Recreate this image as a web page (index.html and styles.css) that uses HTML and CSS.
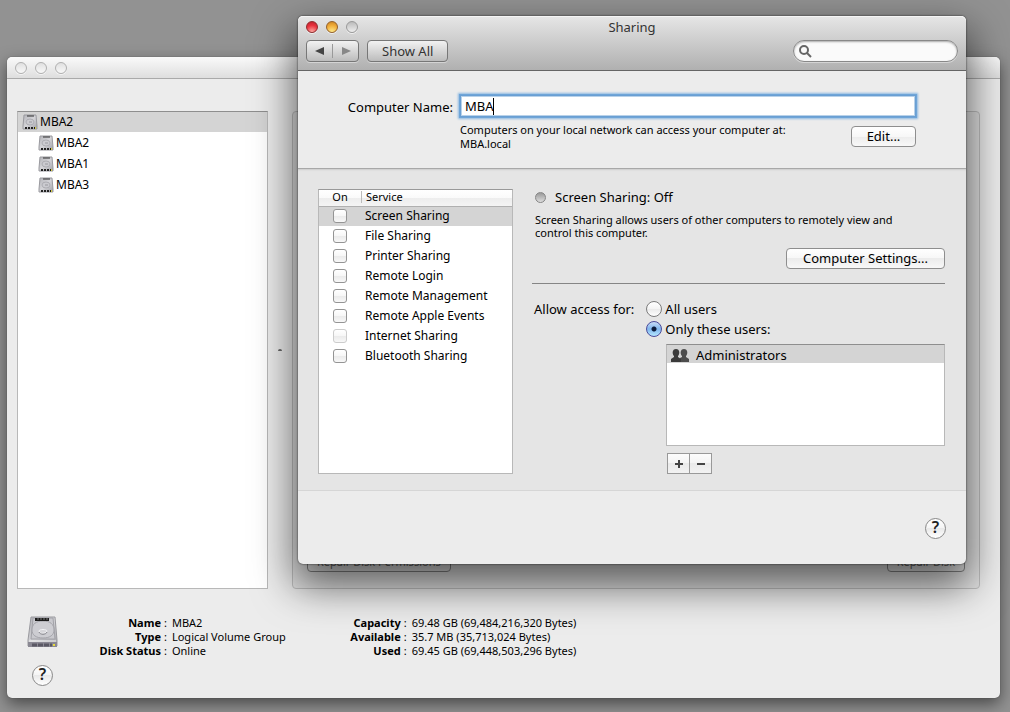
FILE: index.html
```html
<!DOCTYPE html>
<html lang="en">
<head>
    <meta charset="UTF-8">
    <meta name="viewport" content="width=device-width, initial-scale=1.0">
    <title>Sharing</title>
    <link rel="stylesheet" href="styles.css">
</head>
<body>
    <!-- Shared icons -->
    <svg class="defs" width="0" height="0" aria-hidden="true">
        <defs>
            <linearGradient id="metal" x1="0" y1="0" x2="1" y2="1">
                <stop offset="0" stop-color="#b4b4b9"/>
                <stop offset="0.5" stop-color="#d4d4d8"/>
                <stop offset="1" stop-color="#a2a2a8"/>
            </linearGradient>
            <symbol id="disk" viewBox="0 0 32 32">
                <path d="M4 1h24l2 23v6H1v-6z" fill="url(#metal)" stroke="#9a9a9f"/>
                <path d="M6 2h20l2 21H4z" fill="#c9c9ce" stroke="#a2a2a8"/>
                <path d="M5 14c0-6 4-9 11-9s11 3 11 9c0 5-4 8-11 8S5 19 5 14z" fill="#cdcdd2" stroke="#a4a4aa"/>
                <path d="M12 15c0-2 8-2 8 0s-8 4-8 0z" fill="#d6d6da" stroke="#f2f2f4"/>
                <path d="M12 16c1 3 7 3 8 0" fill="none" stroke="#85858b"/>
                <path d="M8 2h14v3H8z" fill="#1c1c1c"/>
                <path d="M10 3h2m1 0h2m1 0h2m1 0h2" stroke="#777"/>
                <path d="M1 26h29v5H1z" fill="#8a8893"/>
                <path d="M5 29h20" stroke="#5a5864" stroke-width="3" stroke-dasharray="5 1"/>
                <path d="M26 28h2v2h-2z" fill="#e9dc3a"/>
                <path d="M2 25h27" stroke="#eee"/>
            </symbol>
            <symbol id="disk-small" viewBox="0 0 16 16">
                <path d="M2 1h12l1 11v3H1v-3z" fill="url(#metal)" stroke="#9a9a9f"/>
                <path d="M5 2h7" stroke="#333"/>
                <ellipse cx="8" cy="8" rx="4" ry="3" fill="#cbcbd0" stroke="#adadb3"/>
                <path d="M7 8h3" stroke="#98989e"/>
                <path d="M3 14h10" stroke="#222" stroke-width="2" stroke-dasharray="2 1"/>
                <path d="M13 13h1v2h-1z" fill="#d8ce45"/>
            </symbol>
        </defs>
    </svg>

    <div class="desktop">
        <!-- Disk utility window -->
        <section class="window disk-window">
            <header class="titlebar">
                <button class="light" aria-label="Close"></button>
                <button class="light" aria-label="Minimize"></button>
                <button class="light" aria-label="Zoom"></button>
            </header>
            <div class="disk-body">
                <ul class="disk-list">
                    <li class="selected"><svg class="disk-icon"><use href="#disk-small"/></svg>MBA2</li>
                    <li class="child"><svg class="disk-icon"><use href="#disk-small"/></svg>MBA2</li>
                    <li class="child"><svg class="disk-icon"><use href="#disk-small"/></svg>MBA1</li>
                    <li class="child"><svg class="disk-icon"><use href="#disk-small"/></svg>MBA3</li>
                </ul>
                <div class="splitter"><span class="grip"></span></div>
                <div class="disk-panel">
                    <button class="push" disabled>Repair Disk Permissions</button>
                    <button class="push" disabled>Repair Disk</button>
                </div>
            </div>
            <footer class="disk-info">
                <svg class="disk-large"><use href="#disk"/></svg>
                <dl class="facts">
                    <dt>Name</dt><dd>MBA2</dd>
                    <dt>Type</dt><dd>Logical Volume Group</dd>
                    <dt>Disk Status</dt><dd>Online</dd>
                </dl>
                <dl class="facts facts-size">
                    <dt>Capacity</dt><dd>69.48 GB (69,484,216,320 Bytes)</dd>
                    <dt>Available</dt><dd>35.7 MB (35,713,024 Bytes)</dd>
                    <dt>Used</dt><dd>69.45 GB (69,448,503,296 Bytes)</dd>
                </dl>
            </footer>
            <div class="disk-help">
                <button class="help">?</button>
            </div>
        </section>

        <!-- Sharing window -->
        <section class="window sharing-window">
            <header class="toolbar">
                <div class="title-row">
                    <div class="lights">
                        <button class="light red" aria-label="Close"></button>
                        <button class="light yellow" aria-label="Minimize"></button>
                        <button class="light" aria-label="Zoom"></button>
                    </div>
                    <h1>Sharing</h1>
                </div>
                <div class="tool-row">
                    <div class="nav">
                        <button aria-label="Back"><svg width="10" height="8"><path d="M9 0v8L0 4z" fill="#444"/></svg></button>
                        <button aria-label="Forward"><svg width="10" height="8"><path d="M1 0v8l9-4z" fill="#888"/></svg></button>
                    </div>
                    <button class="tool">Show All</button>
                    <label class="search">
                        <svg width="14" height="14" viewBox="0 0 14 14"><circle cx="6" cy="6" r="4" fill="none" stroke="#666" stroke-width="2"/><path d="M9 9l4 4" stroke="#666" stroke-width="2"/></svg>
                        <input type="search" aria-label="Search">
                    </label>
                </div>
            </header>

            <div class="name-section">
                <label for="computer-name">Computer Name:</label>
                <div class="name-field">
                    <input type="text" id="computer-name" value="MBA">
                    <span class="caret"></span>
                    <div class="name-note">
                        <p class="small">Computers on your local network can access your computer at:<br>MBA.local</p>
                        <button class="push">Edit...</button>
                    </div>
                </div>
            </div>

            <div class="service-section">
                <div class="service-box">
                    <table class="services">
                        <thead>
                            <tr><th>On</th><th><span>Service</span></th></tr>
                        </thead>
                        <tbody>
                            <tr class="selected"><td><input type="checkbox" id="screen"></td><td><label for="screen">Screen Sharing</label></td></tr>
                            <tr><td><input type="checkbox" id="file"></td><td><label for="file">File Sharing</label></td></tr>
                            <tr><td><input type="checkbox" id="printer"></td><td><label for="printer">Printer Sharing</label></td></tr>
                            <tr><td><input type="checkbox" id="login"></td><td><label for="login">Remote Login</label></td></tr>
                            <tr><td><input type="checkbox" id="management"></td><td><label for="management">Remote Management</label></td></tr>
                            <tr><td><input type="checkbox" id="events"></td><td><label for="events">Remote Apple Events</label></td></tr>
                            <tr><td><input type="checkbox" id="internet" disabled></td><td><label for="internet">Internet Sharing</label></td></tr>
                            <tr><td><input type="checkbox" id="bluetooth"></td><td><label for="bluetooth">Bluetooth Sharing</label></td></tr>
                        </tbody>
                    </table>
                </div>

                <div class="details">
                    <h2><span class="status"></span>Screen Sharing: Off</h2>
                    <p class="small">Screen Sharing allows users of other computers to remotely view and control this computer.</p>
                    <button class="push settings">Computer Settings...</button>
                    <hr>
                    <div class="access" role="radiogroup" aria-labelledby="access-label">
                        <span id="access-label">Allow access for:</span>
                        <div class="choices">
                            <label><input type="radio" name="access">All users</label>
                            <label><input type="radio" name="access" checked>Only these users:</label>
                        </div>
                    </div>
                    <div class="users">
                        <ul class="user-list">
                            <li>
                                <svg width="18" height="14" viewBox="0 0 18 14">
                                    <path d="M9 14v-4l2-1V8C9 6 9 1 13 1s4 5 2 7v1l3 2v3z" fill="#4c4c4c"/>
                                    <path d="M0 14v-3l3-2V8C1 6 1 1 5 1s4 5 2 7v1l3 2v3z" fill="#3a3a3a"/>
                                </svg>
                                Administrators
                            </li>
                        </ul>
                        <div class="add-remove">
                            <button aria-label="Add"><svg width="8" height="8"><path d="M4 0v8M0 4h8" stroke="#444" stroke-width="2"/></svg></button>
                            <button aria-label="Remove"><svg width="8" height="8"><path d="M0 4h8" stroke="#444" stroke-width="2"/></svg></button>
                        </div>
                    </div>
                </div>
            </div>

            <footer class="sharing-footer">
                <button class="help">?</button>
            </footer>
        </section>
    </div>
</body>
</html>
```
FILE: styles.css
```css
/* Global Styles */
* {
    box-sizing: border-box;
}

body {
    margin: 0;
    background: #929292;
    color: #000;
    font: 13px/16px "Noto Sans", "Open Sans", sans-serif;
}

h1, h2, p, ul, dl, dd {
    margin: 0;
    padding: 0;
    font-size: inherit;
    font-weight: normal;
}

ul {
    list-style: none;
}

button, input {
    margin: 0;
    padding: 0;
    font: inherit;
    color: inherit;
}

.defs {
    position: absolute;
}

.small {
    font-size: 11px;
    line-height: 14px;
}

/* Windows */
.desktop {
    position: relative;
    min-height: 100vh;
    overflow: hidden;
}

.window {
    position: absolute;
    background: #ececec;
    border-radius: 5px;
}

.disk-window {
    top: 57px;
    left: 7px;
    right: 10px;
    box-shadow: 0 0 1px #333, 0 6px 16px rgba(0, 0, 0, 0.5);
}

.sharing-window {
    top: 16px;
    left: 298px;
    right: 44px;
    box-shadow: 0 0 2px rgba(0, 0, 0, 0.8), 0 18px 40px 4px rgba(0, 0, 0, 0.6);
}

.light {
    width: 12px;
    height: 12px;
    border: 1px solid #999;
    border-radius: 50%;
    background: linear-gradient(#bbb, #eee);
    box-shadow: 0 1px 0 rgba(255, 255, 255, 0.6);
}

.titlebar .light {
    border: 1px solid #b0b0b0;
    background: linear-gradient(#e0e0e0, #f8f8f8);
}

.light.red {
    border-color: #8f2a2c;
    background: radial-gradient(circle at 50% 100%, #ffb0a8, #e8303c 60%, #b8202c);
}

.light.yellow {
    border-color: #94602a;
    background: radial-gradient(circle at 50% 100%, #ffee90, #f0ac38 60%, #c88020);
}

/* Buttons */
.push {
    height: 21px;
    min-width: 65px;
    padding: 0 12px 2px;
    border: 1px solid #8e8e8e;
    border-radius: 4px;
    background: linear-gradient(#fff, #f7f7f7 50%, #ececec 50%, #f8f8f8);
    line-height: 18px;
    white-space: nowrap;
}

.push:disabled {
    padding: 0 9px;
    border-color: #888;
    background: none;
    color: #666;
    font-size: 11px;
}

.help {
    width: 21px;
    height: 21px;
    padding-bottom: 2px;
    border: 1px solid #888;
    border-radius: 50%;
    background: linear-gradient(#fff, #f4f4f4 50%, #e9e9e9 50%, #fff);
    color: #222;
    font-size: 16px;
    font-weight: 600;
    line-height: 17px;
}

/* Disk window */
.titlebar {
    display: flex;
    align-items: center;
    gap: 8px;
    height: 22px;
    padding: 0 8px;
    border-bottom: 1px solid #aaa;
    border-radius: 5px 5px 0 0;
    background: linear-gradient(#fafafa, #dedede);
}

.disk-body {
    display: flex;
    padding: 32px 20px 0 10px;
}

.disk-list {
    width: 251px;
    min-height: 478px;
    border: 1px solid #b8b8b8;
    border-top-color: #8e8e8e;
    background: #fff;
    font-size: 12px;
}

.disk-list li {
    display: flex;
    align-items: center;
    gap: 2px;
    height: 21px;
    padding-left: 4px;
}

.disk-list .child {
    padding-left: 20px;
}

.disk-list .selected {
    height: 20px;
    background: #d4d4d4;
}

.disk-icon {
    width: 16px;
    height: 16px;
}

.splitter {
    display: flex;
    align-items: center;
    justify-content: center;
    width: 24px;
}

.grip {
    width: 4px;
    height: 2px;
    border-radius: 2px 2px 0 0;
    background: #666;
}

.disk-panel {
    display: flex;
    flex: 1;
    align-items: flex-end;
    justify-content: space-between;
    padding: 0 14px 16px;
    border: 1px solid #c0c0c0;
    border-radius: 4px;
    background: #e4e4e4;
}

.disk-info {
    display: flex;
    padding: 27px 20px 0;
    font-size: 11px;
    line-height: 14px;
}

.disk-large {
    width: 32px;
    height: 32px;
}

.facts {
    display: grid;
    grid-template-columns: 102px auto;
    align-content: start;
    column-gap: 3px;
}

.facts-size {
    margin-left: 13px;
}

.facts dt {
    font-weight: bold;
    text-align: right;
}

.facts dd::before {
    content: ":";
    margin-right: 5px;
}

.disk-help {
    padding: 7px 25px 12px;
}

.disk-help .help {
    display: block;
}

/* Sharing window toolbar */
.toolbar {
    height: 55px;
    padding: 0 8px;
    border-bottom: 1px solid #656565;
    border-radius: 5px 5px 0 0;
    background: linear-gradient(#e6e6e6, #b0b0b0);
    box-shadow: inset 0 1px 0 #f4f4f4;
    color: #333;
}

.title-row {
    display: grid;
    grid-template-columns: 1fr auto 1fr;
    height: 24px;
    padding-top: 3px;
}

.lights {
    display: flex;
    gap: 8px;
    padding-top: 2px;
}

.tool-row {
    display: flex;
    align-items: center;
    gap: 8px;
}

.nav {
    display: flex;
    padding: 3px 0;
    border: 1px solid #777;
    border-radius: 4px;
    background: linear-gradient(#f2f2f2, #bcbcbc);
    box-shadow: 0 1px 0 rgba(255, 255, 255, 0.4);
}

.nav button {
    display: flex;
    align-items: center;
    justify-content: center;
    width: 25px;
    height: 14px;
    border: 0;
    background: none;
}

.nav button + button {
    width: 26px;
    border-left: 1px solid #999;
}

.tool {
    height: 22px;
    padding: 0 14px;
    border: 1px solid #777;
    border-radius: 4px;
    background: linear-gradient(#f2f2f2, #bcbcbc);
    box-shadow: 0 1px 0 rgba(255, 255, 255, 0.4);
    line-height: 18px;
}

.search {
    display: flex;
    align-items: center;
    width: 165px;
    height: 22px;
    margin-left: auto;
    padding: 0 4px;
    border: 1px solid #888;
    border-radius: 11px;
    background: #fafafa;
    box-shadow: inset 0 1px 2px #aaa, 0 1px 0 rgba(255, 255, 255, 0.4);
}

.search input {
    flex: 1;
    min-width: 0;
    border: 0;
    outline: 0;
    background: none;
}

/* Computer name */
.name-section {
    display: flex;
    gap: 7px;
    padding: 24px 50px 17px 20px;
    border-bottom: 1px solid #a8a8a8;
}

.name-section label {
    width: 135px;
    padding-top: 4px;
    text-align: right;
    white-space: nowrap;
}

.name-field {
    position: relative;
    flex: 1;
}

.name-field input {
    display: block;
    width: 100%;
    height: 22px;
    padding: 0 4px;
    border: 1px solid #6a9fd3;
    outline: 0;
    background: #fff;
    box-shadow: 0 0 0 1px #6fa5d8, 0 0 2px 2px #8db9e2, inset 0 0 0 1px #b8d2ea;
}

.caret {
    position: absolute;
    top: 3px;
    left: 33px;
    width: 1px;
    height: 17px;
    background: #000;
}

.name-note {
    display: flex;
    align-items: flex-start;
    justify-content: space-between;
    padding-top: 6px;
}

.name-note .push {
    margin-top: 3px;
}

/* Services */
.service-section {
    display: flex;
    gap: 19px;
    padding: 20px 21px 16px 20px;
    border-bottom: 1px solid #d6d6d6;
    background: #e5e5e5;
    box-shadow: inset 0 2px 2px -1px #ccc;
}

.service-box {
    width: 195px;
    border: 1px solid #b8b8b8;
    border-top-color: #999;
    background: #fff;
}

.services {
    width: 100%;
    border-collapse: collapse;
    font-size: 12px;
}

.services th {
    height: 16px;
    padding: 0 0 1px;
    border-bottom: 1px solid #b0b0b0;
    background: linear-gradient(#fff, #fafafa 50%, #ededed 50%, #f4f4f4);
    font-size: 11px;
    font-weight: normal;
    line-height: 12px;
    text-align: left;
}

.services th:first-child {
    width: 42px;
    text-align: center;
}

.services th span {
    display: block;
    padding-left: 4px;
    border-left: 1px solid #bbb;
}

.services td {
    height: 20px;
    padding: 0 0 0 4px;
}

.services td:first-child {
    padding: 0;
    text-align: center;
}

.services .selected {
    background: #d4d4d4;
}

.services input {
    display: block;
    width: 14px;
    height: 14px;
    margin: 0 auto;
    border: 1px solid #949494;
    border-radius: 3px;
    appearance: none;
    background: linear-gradient(#fff, #f6f6f6 50%, #eaeaea 50%, #f8f8f8);
}

.services input:disabled {
    border-color: #ccc;
}

/* Service details */
.details {
    flex: 1;
}

.details h2 {
    display: flex;
    align-items: center;
    gap: 9px;
    padding: 0 0 8px 3px;
}

.details .small {
    padding: 0 30px 0 3px;
    line-height: 13px;
}

.status {
    width: 11px;
    height: 11px;
    border: 1px solid #858585;
    border-radius: 50%;
    background: linear-gradient(#999, #ddd);
}

.settings {
    display: block;
    min-width: 159px;
    margin: 9px 0 0 auto;
}

.details hr {
    height: 1px;
    margin: 14px 0 15px;
    border: 0;
    background: #858585;
}

.access {
    display: flex;
    gap: 12px;
    padding-left: 2px;
    line-height: 20px;
}

.choices label {
    display: flex;
    align-items: center;
    gap: 3px;
    height: 20px;
}

.choices input {
    width: 16px;
    height: 16px;
    border: 1px solid #7c7c7c;
    border-radius: 50%;
    appearance: none;
    background: linear-gradient(#fff, #f4f4f4 50%, #eaeaea 50%, #fff);
}

.choices input:checked {
    border-color: #4a4a9a;
    background: radial-gradient(circle, #0c1c3c 2px, transparent 3px), linear-gradient(#c8dcf6, #80b6ee 50%, #b4e8ff);
}

.users {
    padding: 5px 0 0 134px;
}

.user-list {
    min-height: 102px;
    border: 1px solid #b8b8b8;
    border-top-color: #8e8e8e;
    background: #fff;
}

.user-list li {
    display: flex;
    align-items: center;
    gap: 7px;
    height: 18px;
    padding: 2px 4px 0;
    background: #d4d4d4;
}

.add-remove {
    display: flex;
    padding: 7px 1px 0;
}

.add-remove button {
    display: flex;
    align-items: center;
    justify-content: center;
    width: 23px;
    height: 21px;
    border: 1px solid #999;
    background: linear-gradient(#fcfcfc, #f4f4f4 50%, #eaeaea 50%, #f2f2f2);
}

.add-remove button + button {
    margin-left: -1px;
}

.sharing-footer {
    display: flex;
    justify-content: flex-end;
    padding: 27px 20px 25px;
}
```
